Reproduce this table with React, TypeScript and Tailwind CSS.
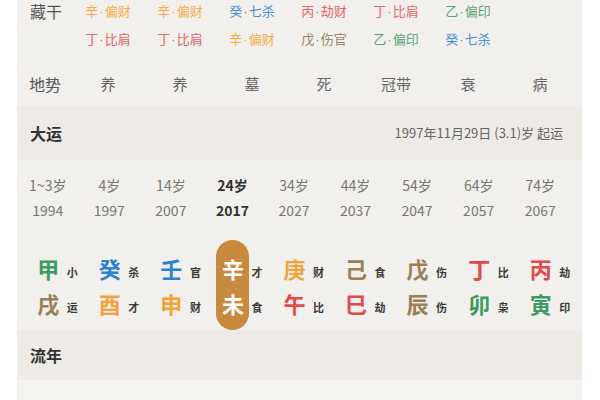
const font = { fontFamily: '"Noto Sans CJK SC", "Noto Sans", sans-serif' };

type Hidden = { gan: string; god: string; color: string };

const hiddenRows: Hidden[][] = [
  [
    { gan: "辛", god: "偏财", color: "text-[#f2ac4a]" },
    { gan: "辛", god: "偏财", color: "text-[#f2ac4a]" },
    { gan: "癸", god: "七杀", color: "text-[#4a8fd0]" },
    { gan: "丙", god: "劫财", color: "text-[#dc6a66]" },
    { gan: "丁", god: "比肩", color: "text-[#dc6a66]" },
    { gan: "乙", god: "偏印", color: "text-[#5ba178]" },
  ],
  [
    { gan: "丁", god: "比肩", color: "text-[#dc6a66]" },
    { gan: "丁", god: "比肩", color: "text-[#dc6a66]" },
    { gan: "辛", god: "偏财", color: "text-[#f2ac4a]" },
    { gan: "戊", god: "伤官", color: "text-[#9c8462]" },
    { gan: "乙", god: "偏印", color: "text-[#5ba178]" },
    { gan: "癸", god: "七杀", color: "text-[#4a8fd0]" },
  ],
];

const terrain = ["养", "养", "墓", "死", "冠带", "衰", "病"];

const luck = [
  { age: "1~3岁", year: "1994" },
  { age: "4岁", year: "1997" },
  { age: "14岁", year: "2007" },
  { age: "24岁", year: "2017", active: true },
  { age: "34岁", year: "2027" },
  { age: "44岁", year: "2037" },
  { age: "54岁", year: "2047" },
  { age: "64岁", year: "2057" },
  { age: "74岁", year: "2067" },
];

const green = "text-[#3c9a62]";
const blue = "text-[#2f7fd3]";
const orange = "text-[#f2a23a]";
const brown = "text-[#9a8058]";
const red = "text-[#e04a4a]";

const pillars = [
  { top: ["甲", "小", green], bottom: ["戌", "运", brown] },
  { top: ["癸", "杀", blue], bottom: ["酉", "才", orange] },
  { top: ["壬", "官", blue], bottom: ["申", "财", orange] },
  { top: ["辛", "才", "text-white"], bottom: ["未", "食", "text-white"], active: true },
  { top: ["庚", "财", orange], bottom: ["午", "比", red] },
  { top: ["己", "食", brown], bottom: ["巳", "劫", red] },
  { top: ["戊", "伤", brown], bottom: ["辰", "伤", brown] },
  { top: ["丁", "比", red], bottom: ["卯", "枭", green] },
  { top: ["丙", "劫", red], bottom: ["寅", "印", green] },
];

function Pillar({ p }: { p: (typeof pillars)[number] }) {
  return (
    <div className="flex justify-center pl-[14px]">
      <div
        className={`flex w-[33px] flex-col items-center rounded-full py-[10px] ${
          p.active ? "bg-[#c88a3e]" : ""
        }`}
      >
        {[p.top, p.bottom].map((c, i) => (
          <span
            key={i}
            className={`flex h-[35px] items-center text-[22px] font-bold leading-none ${c[2]}`}
          >
            {c[0]}
          </span>
        ))}
      </div>
      <div className="ml-[2px] flex flex-col py-[10px]">
        {[p.top, p.bottom].map((c, i) => (
          <span
            key={i}
            className="flex h-[35px] items-end pb-[7px] text-[11px] font-bold leading-none text-[#3a3a3a]"
          >
            {c[1]}
          </span>
        ))}
      </div>
    </div>
  );
}

export default function App() {
  return (
    <div className="h-[400px] w-[600px] overflow-hidden bg-white" style={font}>
      <div className="ml-[17px] w-[565px] bg-[#f2f0ed]">
        {/* 藏干 */}
        <div className="flex h-[62px]">
          <div className="w-[55px] pl-[13px] text-[16px] leading-[22px] text-[#555]">藏干</div>
          <div className="flex flex-col gap-[6px]">
            {hiddenRows.map((row, r) => (
              <div key={r} className="grid h-[22px] grid-cols-[repeat(7,72px)] items-center">
                {row.map((h, i) => (
                  <span key={i} className={`text-center text-[13px] ${h.color}`}>
                    {h.gan}
                    <span className="font-['Liberation_Sans'] px-[1px]">·</span>
                    {h.god}
                  </span>
                ))}
              </div>
            ))}
          </div>
        </div>

        {/* 地势 */}
        <div className="flex h-[44px] items-center">
          <div className="w-[55px] pl-[12px] text-[16px] text-[#555]">地势</div>
          <div className="grid grid-cols-[repeat(7,72px)]">
            {terrain.map((t, i) => (
              <span key={i} className="text-center text-[15px] text-[#666]">
                {t}
              </span>
            ))}
          </div>
        </div>

        {/* 大运 header */}
        <div className="flex h-[54px] items-center justify-between bg-[#eeebe7] pl-[13px] pr-[19px]">
          <span className="text-[16px] font-bold text-[#333]">大运</span>
          <span className="text-[13px] text-[#666]">1997年11月29日 (3.1)岁 起运</span>
        </div>

        {/* 大运 list */}
        <div className="grid h-[80px] w-[554px] grid-cols-9 pt-[13px]">
          {luck.map((l) => (
            <div
              key={l.year}
              className={`flex flex-col items-center text-[14px] ${
                l.active ? "font-bold text-[#333]" : "text-[#777]"
              }`}
            >
              <span className="leading-[25px]">{l.age}</span>
              <span className="leading-[25px]">{l.year}</span>
            </div>
          ))}
        </div>

        {/* pillars */}
        <div className="grid h-[90px] w-[554px] grid-cols-9">
          {pillars.map((p, i) => (
            <Pillar key={i} p={p} />
          ))}
        </div>

        {/* 流年 header */}
        <div className="flex h-[50px] items-center bg-[#eeebe7] pl-[13px]">
          <span className="text-[16px] font-bold text-[#333]">流年</span>
        </div>

        {/* 流年 list (cut off by the window) */}
        <div className="h-[40px] bg-[#f4f3f0] pt-[14px]">
          <div className="grid w-[554px] grid-cols-9">
            {["2017", "2018", "2019", "2020", "2021", "2022", "2023", "2024", "2025"].map((y) => (
              <span key={y} className="text-center text-[14px] text-[#777]">
                {y}
              </span>
            ))}
          </div>
        </div>
      </div>
    </div>
  );
}
